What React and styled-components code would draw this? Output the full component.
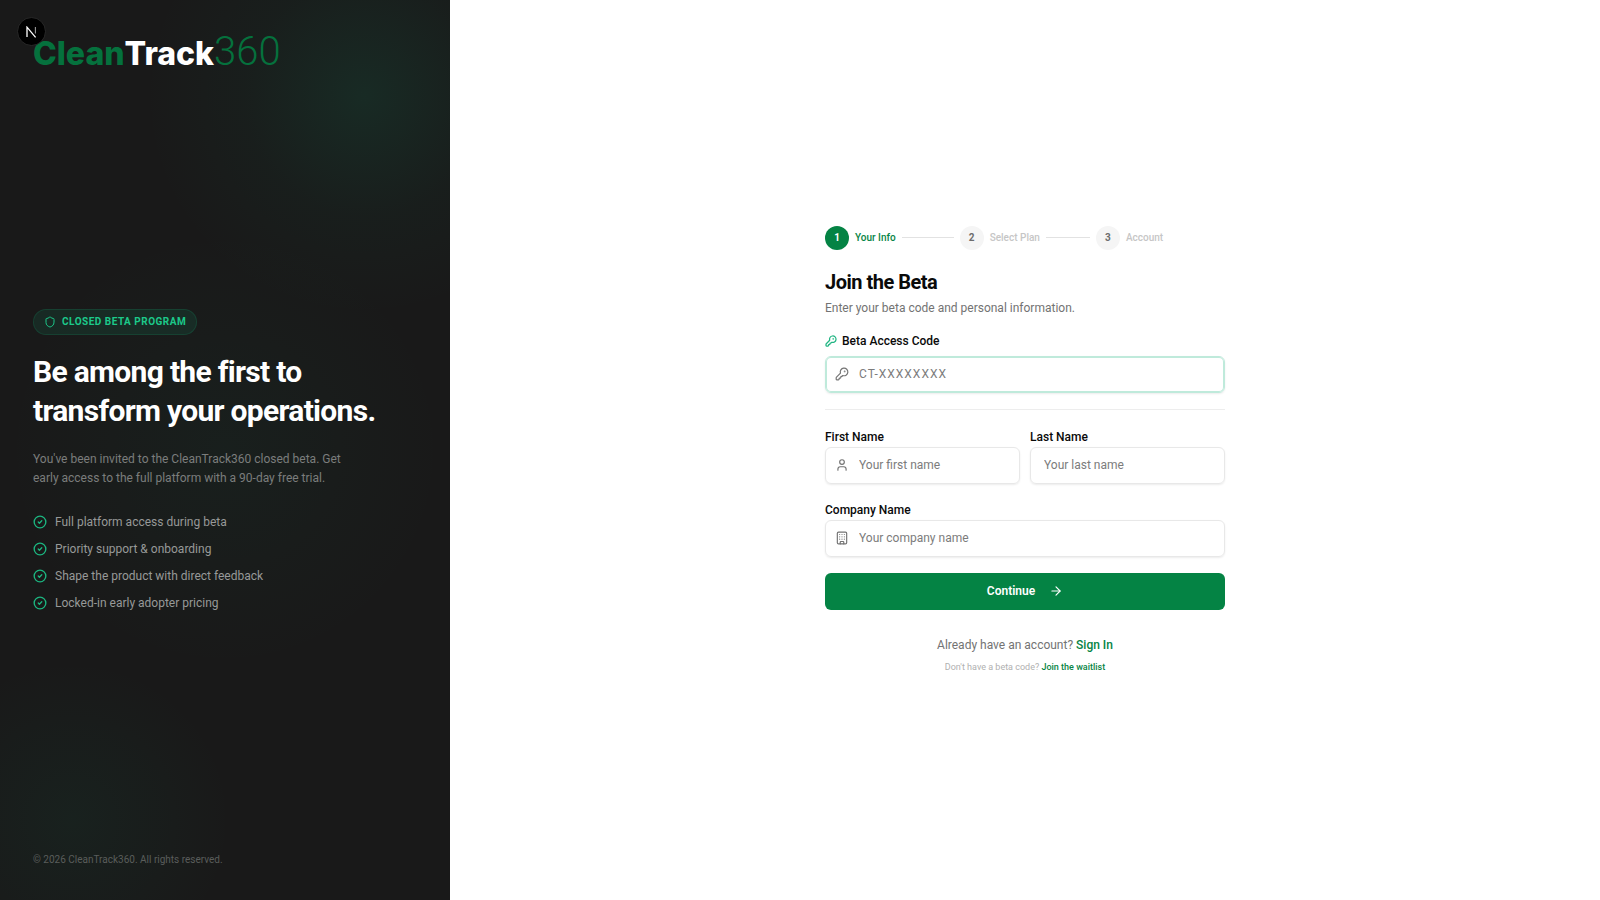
import React, { useState } from "react";
import styled, { createGlobalStyle } from "styled-components";
import {
  ArrowRight,
  Building,
  CircleCheck,
  KeyRound,
  Shield,
  User,
} from "lucide-react";

const GlobalStyle = createGlobalStyle`
  * {
    box-sizing: border-box;
  }
  body {
    margin: 0;
    background: #fff;
    color: #0a0a0a;
    font-family: Roboto, sans-serif;
    font-size: 14px;
    line-height: 20px;
  }
  h1, h2, p, ul, ol {
    margin: 0;
    padding: 0;
  }
  ul, ol {
    list-style: none;
  }
`;

const Container = styled.div`
  display: flex;
  min-height: 100vh;
`;

const Sidebar = styled.aside`
  position: relative;
  display: flex;
  flex-direction: column;
  justify-content: space-between;
  flex: 0 0 450px;
  padding: 32px 33px 32px;
  background:
    radial-gradient(circle at 364px 96px, rgba(16, 185, 129, 0.11), rgba(16, 185, 129, 0.03) 120px, transparent 220px),
    radial-gradient(circle at 72px 820px, rgba(16, 185, 129, 0.05), rgba(16, 185, 129, 0.02) 100px, transparent 160px),
    radial-gradient(circle at 225px 450px, rgba(16, 185, 129, 0.04), transparent 220px),
    #191919;
`;

const DevBadge = styled.button`
  position: absolute;
  top: 17px;
  left: 17px;
  display: flex;
  align-items: center;
  justify-content: center;
  width: 29px;
  height: 29px;
  padding: 0;
  border: 1px solid #292929;
  border-radius: 50%;
  background: #000;
`;

const Logo = styled.div`
  display: flex;
  align-items: baseline;
  height: 36px;
  font-family: Inter, sans-serif;
  font-size: 32px;
  font-weight: 800;
  line-height: 40px;
  color: #05713d;
`;

const LogoLight = styled.span`
  color: #fff;
`;

const LogoNumber = styled.span`
  font-family: Roboto, sans-serif;
  font-size: 40px;
  font-weight: 300;
`;

const Pitch = styled.section`
  display: flex;
  flex-direction: column;
  align-items: flex-start;
`;

const Pill = styled.div`
  display: flex;
  align-items: center;
  gap: 6px;
  height: 26px;
  padding: 0 10px;
  border: 1px solid rgba(16, 185, 129, 0.15);
  border-radius: 13px;
  background: rgba(16, 185, 129, 0.11);
  color: #1cc98a;
  font-size: 10px;
  font-weight: 700;
  letter-spacing: 0.5px;
  text-transform: uppercase;
`;

const Headline = styled.h2`
  margin-top: 17px;
  color: #fff;
  font-size: 30px;
  font-weight: 700;
  letter-spacing: -0.7px;
  line-height: 39px;
`;

const Lead = styled.p`
  max-width: 320px;
  margin-top: 20px;
  color: #7b7d7c;
  font-size: 12px;
  line-height: 19px;
`;

const Perks = styled.ul`
  display: flex;
  flex-direction: column;
  gap: 9px;
  margin-top: 25px;
`;

const Perk = styled.li`
  display: flex;
  align-items: center;
  gap: 8px;
  color: #979998;
  font-size: 12px;
  line-height: 18px;

  svg {
    color: #1cb680;
  }
`;

const Copyright = styled.p`
  color: #5a5d5b;
  font-size: 10px;
  line-height: 16px;
`;

const Main = styled.main`
  display: flex;
  flex: 1;
  align-items: center;
  justify-content: center;
  padding: 34px 32px 32px;
`;

const Panel = styled.div`
  width: 100%;
  max-width: 400px;
`;

const Steps = styled.ol`
  display: flex;
  align-items: center;
`;

const Step = styled.li`
  display: flex;
  align-items: center;
  gap: 6px;
  color: ${(props) => (props.$active ? "#078445" : "#c6c6c6")};
  font-size: 10px;
  font-weight: 500;
`;

const StepNumber = styled.span`
  width: 24px;
  height: 24px;
  border-radius: 50%;
  background: ${(props) => (props.$active ? "#048344" : "#f5f5f5")};
  color: ${(props) => (props.$active ? "#fff" : "#6d6d6d")};
  font-size: 10px;
  font-weight: 700;
  line-height: 24px;
  text-align: center;
`;

const StepLine = styled.li`
  width: ${(props) => props.$width};
  height: 1px;
  margin: 0 6px;
  background: #e2e2e2;
`;

const Title = styled.h1`
  margin-top: 19px;
  font-size: 20px;
  font-weight: 700;
  letter-spacing: -0.5px;
  line-height: 26px;
`;

const Subtitle = styled.p`
  margin-top: 3px;
  color: #737373;
  font-size: 12px;
`;

const Form = styled.form`
  display: flex;
  flex-direction: column;
  margin-top: 13px;
`;

const Label = styled.label`
  display: flex;
  align-items: center;
  gap: 5px;
  margin-bottom: ${(props) => (props.$spaced ? "5px" : "0")};
  font-size: 12px;
  font-weight: 500;

  svg {
    color: #22b583;
  }
`;

const InputWrapper = styled.div`
  display: flex;
  align-items: center;
  gap: 10px;
  height: 37px;
  padding: 0 ${(props) => (props.$plain ? "13px" : "9px")};
  border: 1px solid ${(props) => (props.$focused ? "#bfeadb" : "#e8e8e8")};
  border-radius: 6px;
  box-shadow: ${(props) => (props.$focused ? "inset 0 0 0 1px #bfeadb, " : "")}0 1px 2px rgba(0, 0, 0, 0.08);
  color: #737373;

  svg {
    flex-shrink: 0;
  }
`;

const Input = styled.input`
  flex: 1;
  min-width: 0;
  padding: 0;
  border: 0;
  outline: 0;
  background: none;
  font-family: inherit;
  font-size: 12px;
  letter-spacing: ${(props) => (props.$code ? "1px" : "normal")};

  &::placeholder {
    color: #7c7c7c;
    opacity: 1;
  }
`;

const Divider = styled.hr`
  width: 100%;
  height: 1px;
  margin: 16px 0 17px;
  border: 0;
  background: #ededed;
`;

const NameRow = styled.div`
  display: grid;
  grid-template-columns: repeat(2, minmax(0, 1fr));
  gap: 10px;
  margin-bottom: 16px;
`;

const Button = styled.button`
  display: flex;
  align-items: center;
  justify-content: center;
  gap: 14px;
  height: 37px;
  margin-top: 16px;
  border: 0;
  border-radius: 6px;
  background: #048344;
  color: #fff;
  font-family: inherit;
  font-size: 12px;
  font-weight: 600;
`;

const Footnote = styled.p`
  margin-top: ${(props) => (props.$small ? "2px" : "25px")};
  color: ${(props) => (props.$small ? "#b0b0b0" : "#737373")};
  font-size: ${(props) => (props.$small ? "9px" : "12px")};
  text-align: center;
`;

const Link = styled.a`
  color: #078445;
  font-weight: 500;
  text-decoration: none;
`;

const perks = [
  "Full platform access during beta",
  "Priority support & onboarding",
  "Shape the product with direct feedback",
  "Locked-in early adopter pricing",
];

const App = () => {
  const [values, setValues] = useState({ code: "", first: "", last: "", company: "" });

  const handleChange = (e) => {
    setValues({ ...values, [e.target.name]: e.target.value });
  };

  return (
    <Container>
      <GlobalStyle />
      <Sidebar>
        <Logo>
          Clean<LogoLight>Track</LogoLight>
          <LogoNumber>360</LogoNumber>
        </Logo>
        <Pitch>
          <Pill>
            <Shield size={12} />
            Closed Beta Program
          </Pill>
          <Headline>
            Be among the first to
            <br />
            transform your operations.
          </Headline>
          <Lead>
            You've been invited to the CleanTrack360 closed beta. Get early
            access to the full platform with a 90-day free trial.
          </Lead>
          <Perks>
            {perks.map((perk) => (
              <Perk key={perk}>
                <CircleCheck size={14} strokeWidth={2.3} />
                {perk}
              </Perk>
            ))}
          </Perks>
        </Pitch>
        <Copyright>© 2026 CleanTrack360. All rights reserved.</Copyright>
        <DevBadge type="button" aria-label="Open dev tools">
          <svg width="11" height="12" viewBox="0 0 11 12" fill="none" stroke="#fff">
            <path d="M1 11V1.2L9.6 11.4" strokeWidth="1.3" />
            <path d="M9.4 1v6.5" strokeWidth="1.1" strokeOpacity="0.6" />
          </svg>
        </DevBadge>
      </Sidebar>
      <Main>
        <Panel>
          <Steps>
            <Step $active>
              <StepNumber $active>1</StepNumber>
              Your Info
            </Step>
            <StepLine $width="52px" />
            <Step>
              <StepNumber>2</StepNumber>
              Select Plan
            </Step>
            <StepLine $width="44px" />
            <Step>
              <StepNumber>3</StepNumber>
              Account
            </Step>
          </Steps>
          <Title>Join the Beta</Title>
          <Subtitle>Enter your beta code and personal information.</Subtitle>
          <Form onSubmit={(e) => e.preventDefault()}>
            <Label htmlFor="code" $spaced>
              <KeyRound size={12} strokeWidth={2.5} />
              Beta Access Code
            </Label>
            <InputWrapper $focused>
              <KeyRound size={14} />
              <Input id="code" name="code" $code placeholder="CT-XXXXXXXX" value={values.code} onChange={handleChange} />
            </InputWrapper>
            <Divider />
            <NameRow>
              <div>
                <Label htmlFor="first">First Name</Label>
                <InputWrapper>
                  <User size={14} />
                  <Input id="first" name="first" placeholder="Your first name" value={values.first} onChange={handleChange} />
                </InputWrapper>
              </div>
              <div>
                <Label htmlFor="last">Last Name</Label>
                <InputWrapper $plain>
                  <Input id="last" name="last" placeholder="Your last name" value={values.last} onChange={handleChange} />
                </InputWrapper>
              </div>
            </NameRow>
            <Label htmlFor="company">Company Name</Label>
            <InputWrapper>
              <Building size={14} />
              <Input id="company" name="company" placeholder="Your company name" value={values.company} onChange={handleChange} />
            </InputWrapper>
            <Button type="submit">
              Continue
              <ArrowRight size={14} />
            </Button>
          </Form>
          <Footnote>
            Already have an account? <Link href="#signin">Sign In</Link>
          </Footnote>
          <Footnote $small>
            Don't have a beta code? <Link href="#waitlist">Join the waitlist</Link>
          </Footnote>
        </Panel>
      </Main>
    </Container>
  );
};

export default App;
